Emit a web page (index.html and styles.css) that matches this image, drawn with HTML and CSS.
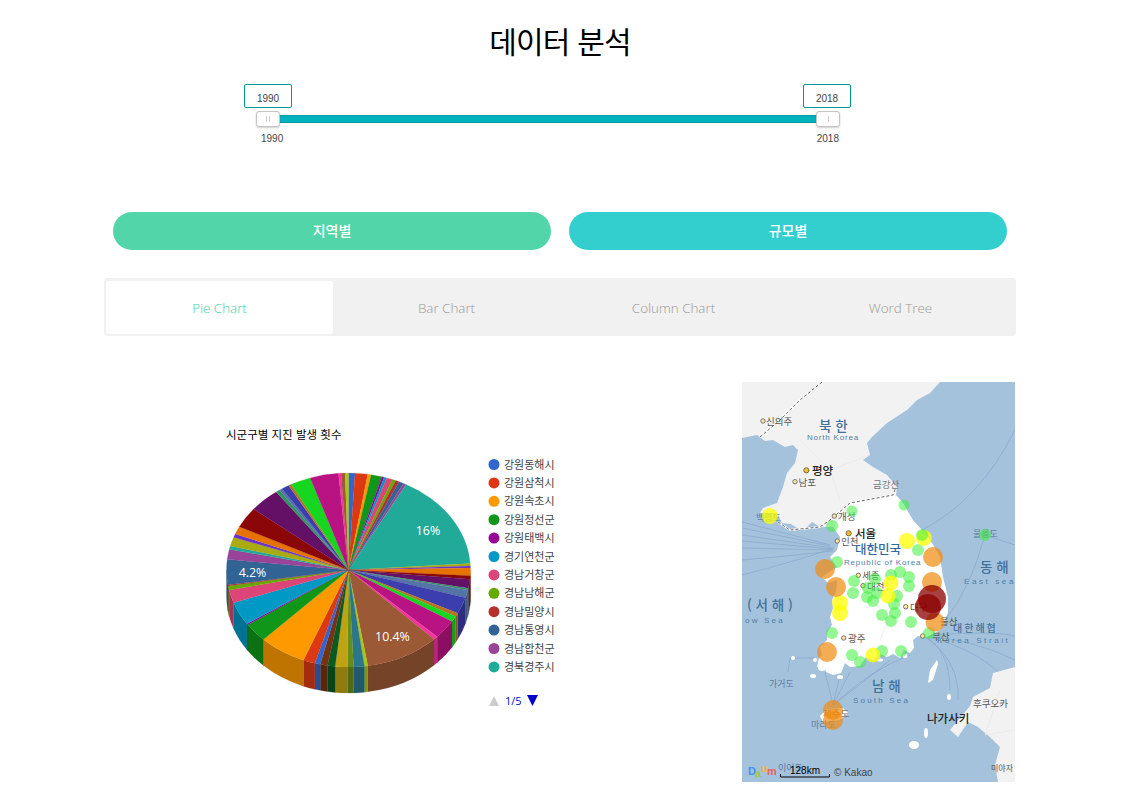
FILE: index.html
```html
<!DOCTYPE html>
<html lang="ko">

<head>
    <meta charset="UTF-8">
    <title>데이터 분석</title>
    <link rel="stylesheet" href="styles.css">
</head>

<body>
    <div id="main">
        <h1 class="title">데이터 분석</h1>

        <div class="range">
            <div class="range-boxes">
                <div class="range-box">1990</div>
                <div class="range-box">2018</div>
            </div>
            <div class="range-slider">
                <div class="range-track"></div>
                <div class="range-handle"><span class="grip"></span><span class="grip"></span></div>
                <div class="range-handle"><span class="grip"></span></div>
            </div>
            <div class="range-labels">
                <span>1990</span>
                <span>2018</span>
            </div>
        </div>

        <div class="buttons">
            <a class="button button-green">지역별</a>
            <a class="button button-teal">규모별</a>
        </div>

        <div class="tabs">
            <div class="tab active">Pie Chart</div>
            <div class="tab">Bar Chart</div>
            <div class="tab">Column Chart</div>
            <div class="tab">Word Tree</div>
        </div>

        <div class="charts">
            <svg id="pie" class="pie" width="500" height="400" viewBox="104 382 500 400">
                <text class="pie-title" x="226" y="439">시군구별 지진 발생 횟수</text>
                <g id="walls"></g>
                <g id="slices"></g>
                <text class="pie-label" x="428" y="535">16%</text>
                <text class="pie-label" x="392.5" y="641">10.4%</text>
                <text class="pie-label" x="252.5" y="577">4.2%</text>
                <g id="legend"></g>
                <polygon points="489,706 499,706 494,696" fill="#cccccc" />
                <text class="pager" x="505" y="705">1/5</text>
                <polygon points="527,695 538,695 532.5,706" fill="#0000cc" />
            </svg>

            <svg id="map" class="map" width="273" height="400" viewBox="742 382 273 400">
                <rect x="742" y="382" width="273" height="400" fill="#a5c2dd" />

                <!-- ferry lines -->
                <g class="routes">
                    <path d="M742 522 L830 545 M742 528 L830 546 M742 535 L832 548 M742 541 L832 549 M742 548 L833 550 M742 560 Q790 556 833 551 M742 575 Q800 560 834 548" />
                    <path d="M924 636 Q985 650 1015 690 M924 636 Q960 660 958 700 M924 636 Q975 640 1015 660 M924 636 Q950 650 950 690 M924 636 Q990 630 1015 636" />
                    <path d="M833 705 L825 672 M833 705 L840 675 M833 705 L850 672 M833 705 Q870 670 910 655 M833 705 Q860 685 890 660 M790 658 L815 658 M790 658 L788 672" />
                    <path d="M922 530 Q980 500 1015 430 M985 535 L1015 545 M985 535 Q970 590 945 620" />
                </g>

                <!-- north korea and china -->
                <path class="land-grey"
                    d="M742 382 L940 382 L930 393 L917 400 L907 410 L887 423 L872 437 L867 443 L870 455 L863 460 L873 467 L887 475 L897 487 L896 495 L877 498 L850 503 L833 527 L820 527 L812 522 L806 528 L800 530 L791 524 L782 523 L777 513 L760 513 L763 508 L777 503 L783 487 L787 473 L795 463 L798 450 L793 445 L785 447 L773 440 L765 441 L757 435 L742 438 Z" />
                <!-- south korea -->
                <path class="land-white"
                    d="M896 495 L903 503 L913 520 L922 530 L932 543 L940 557 L943 577 L948 597 L948 613 L940 630 L927 637 L918 636 L913 640 L914 648 L910 653 L904 650 L900 658 L893 654 L887 657 L880 654 L873 660 L866 657 L860 666 L850 667 L845 663 L841 673 L833 675 L826 672 L824 665 L817 667 L819 658 L822 655 L820 647 L827 640 L827 633 L832 625 L830 617 L833 608 L832 600 L836 592 L837 580 L828 583 L822 577 L829 572 L837 567 L830 557 L837 550 L840 537 L833 527 L850 503 L877 498 Z" />
                <path class="land-white" d="M820 716 L827 709 L843 708 L848 713 L840 720 L823 722 Z" />
                <path class="land-white" d="M937 660 L938 664 L933 680 L928 683 L930 670 Z" />
                <ellipse class="land-white" cx="949" cy="697" rx="2" ry="3" />
                <ellipse class="land-white" cx="914" cy="745" rx="5" ry="4" />
                <ellipse class="land-white" cx="926" cy="733" rx="2" ry="5" />
                <ellipse class="land-white" cx="822" cy="668" rx="4" ry="3" />
                <ellipse class="land-white" cx="813" cy="676" rx="3" ry="2" />
                <ellipse class="land-white" cx="815" cy="660" rx="2" ry="2" />
                <ellipse class="land-white" cx="793" cy="658" rx="2" ry="2" />
                <ellipse class="land-white" cx="840" cy="677" rx="3" ry="2" />
                <ellipse class="land-white" cx="880" cy="660" rx="3" ry="1.5" />
                <ellipse class="land-white" cx="905" cy="656" rx="2.5" ry="2" />
                <!-- japan -->
                <path class="land-grey"
                    d="M1015 667 L993 673 L990 688 L973 697 L970 706 L950 730 L958 737 L968 722 L978 727 L990 737 L1000 747 L995 765 L998 782 L1015 782 Z" />

                <!-- borders -->
                <path class="border" d="M822 382 L800 400 L780 420 L760 437" />
                <path class="border-dash" d="M822 382 L800 400 L780 420 L760 437" />
                <path class="border" d="M778 522 L790 530 L820 527 L830 520 L850 503 L877 498 L893 495 L896 487" />
                <path class="border-dash" d="M778 522 L790 530 L820 527 L830 520 L850 503 L877 498 L893 495 L896 487" />
                <path class="region" d="M800 440 L830 470 L870 455 M830 470 L840 500 M870 540 L900 590 L880 640 M850 590 L900 590 L940 600 M1000 690 L985 735 M1015 730 L985 735" />

                <!-- city dots -->
                <g class="city-dots">
                    <circle cx="763" cy="421" r="2.2" />
                    <circle cx="806.3" cy="470.3" r="2.6" class="big" />
                    <circle cx="795" cy="481.7" r="2.2" />
                    <circle cx="834.3" cy="516" r="2.2" />
                    <circle cx="848.7" cy="533.3" r="2.6" class="big" />
                    <circle cx="837.3" cy="541" r="2.2" />
                    <circle cx="858.3" cy="575.3" r="2.2" />
                    <circle cx="863" cy="585.7" r="2.2" />
                    <circle cx="905.7" cy="606.7" r="2.2" />
                    <circle cx="922.7" cy="636" r="2.2" />
                    <circle cx="843.7" cy="638" r="2.2" />
                </g>

                <!-- place names -->
                <g class="place">
                    <text x="766" y="425">신의주</text>
                    <text x="798.5" y="485.5">남포</text>
                    <text x="873" y="487.5" class="faint">금강산</text>
                    <text x="838" y="520">개성</text>
                    <text x="841" y="545">인천</text>
                    <text x="862" y="579">세종</text>
                    <text x="867" y="589.5">대전</text>
                    <text x="910" y="610.5">대구</text>
                    <text x="940" y="624.5">울산</text>
                    <text x="932" y="640">부산</text>
                    <text x="848" y="642">광주</text>
                    <text x="973" y="707">후쿠오카</text>
                    <text x="991" y="770.5" class="small">미야자</text>
                    <text x="823" y="717" class="faint">제주도</text>
                </g>
                <g class="place place-sea">
                    <text x="756" y="521">백령도</text>
                    <text x="973" y="536.5">울릉도</text>
                    <text x="769" y="687">가거도</text>
                    <text x="811" y="728">마라도</text>
                    <text x="778" y="771">이어도</text>
                </g>
                <text class="city" x="812" y="474.5">평양</text>
                <text class="city" x="855" y="537.5">서울</text>
                <text class="city city-jp" x="927" y="722.5">나가사키</text>

                <g class="sea-name">
                    <text x="819" y="431">북 한</text>
                    <text x="980" y="571.5">동 해</text>
                    <text x="747" y="610">( 서 해 )</text>
                    <text x="872" y="691">남 해</text>
                </g>
                <text class="country" x="855" y="554">대한민국</text>
                <text class="strait" x="953" y="631.5">대한해협</text>
                <g class="sea-en">
                    <text x="807" y="440" class="narrow">North Korea</text>
                    <text x="844" y="564.5" class="narrow">Republic of Korea</text>
                    <text x="964" y="584" class="wide">East sea</text>
                    <text x="745" y="622.5">ow Sea</text>
                    <text x="937" y="643" class="wide">Korea Strait</text>
                    <text x="853" y="703">South Sea</text>
                </g>

                <g id="bubbles"></g>

                <!-- map logo and scale -->
                <g class="daum">
                    <text x="748" y="775" fill="#4b8df0">D</text>
                    <text x="755" y="777" fill="#a4c83a">a</text>
                    <text x="761" y="772" fill="#f3b53a">u</text>
                    <text x="767" y="775" fill="#e5645c">m</text>
                </g>
                <path class="scale" d="M780.5 774 V777 H829.5 V774" />
                <text class="scale-text" x="790" y="773.5">128km</text>
                <text class="copyright" x="834" y="776">© Kakao</text>
            </svg>
        </div>
    </div>

    <script src="chart.js"></script>
</body>

</html>
```

FILE: styles.css
```css
body {
    margin: 0;
    background-color: #fff;
    font-family: "Noto Sans CJK KR", "Open Sans", sans-serif;
}

#main {
    width: 1120px;
    height: 810px;
    overflow: hidden;
}

.title {
    margin: 18px 0 0;
    height: 44px;
    line-height: 44px;
    font-size: 30px;
    font-weight: 400;
    letter-spacing: -0.8px;
    text-align: center;
    color: #000;
}

/* year slider */
.range {
    width: 607px;
    margin: 22px 0 0 244px;
}

.range-boxes {
    display: flex;
    justify-content: space-between;
}

.range-box {
    box-sizing: border-box;
    width: 48px;
    height: 24px;
    padding-top: 6px;
    border: 1px solid #00979d;
    border-radius: 2px;
    font-family: "Liberation Sans", sans-serif;
    font-size: 10px;
    line-height: 16px;
    text-align: center;
    color: #444;
}

.range-slider {
    position: relative;
    display: flex;
    justify-content: space-between;
    width: 584px;
    height: 16px;
    margin: 3px 0 0 12px;
}

.range-track {
    position: absolute;
    top: 4px;
    left: 12px;
    right: 12px;
    height: 8px;
    box-sizing: border-box;
    background-color: #00b3bf;
    border-top: 1px solid #009aa3;
    border-bottom: 1px solid #009aa3;
}

.range-handle {
    position: relative;
    display: flex;
    justify-content: center;
    align-items: center;
    gap: 2px;
    box-sizing: border-box;
    width: 24px;
    height: 16px;
    background-color: #fff;
    border: 1px solid #c4c4c4;
    border-radius: 3px;
    box-shadow: 0 1px 2px rgba(0, 0, 0, 0.2);
}

.grip {
    width: 1px;
    height: 6px;
    background-color: #ccc;
}

.range-labels {
    display: flex;
    justify-content: space-between;
    width: 578px;
    margin: 6px 0 0 17px;
    font-family: "Liberation Sans", sans-serif;
    font-size: 10px;
    line-height: 12px;
    color: #444;
}

/* buttons */
.buttons {
    display: flex;
    justify-content: center;
    gap: 18px;
    margin-top: 67px;
}

.button {
    width: 438px;
    height: 38px;
    border-radius: 19px;
    font-size: 14px;
    font-weight: 500;
    line-height: 36px;
    text-align: center;
    color: #fff;
}

.button-green {
    background-color: #53d5aa;
}

.button-teal {
    background-color: #33cfcf;
}

/* tabs */
.tabs {
    display: flex;
    box-sizing: border-box;
    width: 912px;
    height: 58px;
    margin: 28px 0 0 104px;
    padding: 3px 2px 2px;
    background-color: #f1f1f1;
    border-radius: 4px;
}

.tab {
    width: 227px;
    font-family: "Open Sans", sans-serif;
    font-size: 13.4px;
    font-weight: 300;
    line-height: 54px;
    text-align: center;
    color: #999;
}

.tab.active {
    background-color: #fff;
    border-radius: 3px;
    color: #3fd09f;
}

/* charts */
.charts {
    display: flex;
    justify-content: space-between;
    width: 911px;
    margin: 46px 0 0 104px;
}

.pie-title {
    font-size: 11.5px;
    font-weight: 400;
    fill: #000;
}

.pie-label {
    font-family: "Open Sans", sans-serif;
    font-size: 12.4px;
    text-anchor: middle;
    fill: #fff;
}

.legend-text {
    font-size: 11px;
    fill: #444;
}

.pager {
    font-family: "Open Sans", sans-serif;
    font-size: 11px;
    fill: #0011cc;
}

/* map */
.land-grey {
    fill: #f2f2f2;
}

.land-white {
    fill: #fff;
}

.routes,
.region {
    fill: none;
    stroke-width: 0.6;
}

.routes {
    stroke: #7fa3c7;
}

.region {
    stroke: #e6e6e6;
}

.border {
    fill: none;
    stroke: #fff;
    stroke-width: 2;
}

.border-dash {
    fill: none;
    stroke: #666;
    stroke-width: 1;
    stroke-dasharray: 3 2;
}

.city-dots circle {
    fill: #ffe9a8;
    stroke: #555;
    stroke-width: 0.8;
}

.city-dots .big {
    fill: #f0c020;
}

.place text {
    font-size: 9.5px;
    fill: #555;
}

.place .faint {
    fill: #777;
}

.place .small {
    font-size: 8px;
}

.place-sea text {
    font-size: 9px;
    fill: #5d7d9c;
}

.city {
    font-size: 11.5px;
    font-weight: 500;
    fill: #222;
}

.sea-name text {
    font-size: 13.5px;
    font-weight: 500;
    fill: #3f7199;
}

.country {
    font-size: 12.5px;
    font-weight: 500;
    fill: #2f6a9a;
}

.strait {
    font-size: 10px;
    font-weight: 500;
    letter-spacing: 2px;
    fill: #3f7199;
}

.sea-en text {
    font-family: "Liberation Sans", sans-serif;
    font-size: 8px;
    letter-spacing: 2.2px;
    fill: #4d7fa6;
}

.sea-en .narrow {
    letter-spacing: 0.8px;
}

.sea-en .wide {
    letter-spacing: 2.6px;
}

.daum text {
    font-family: "Liberation Sans", sans-serif;
    font-size: 11px;
    font-weight: 700;
}

.scale {
    fill: none;
    stroke: #000;
    stroke-width: 1;
}

.scale-text {
    font-family: "Liberation Sans", sans-serif;
    font-size: 10px;
    fill: #000;
}

.copyright {
    font-family: "Liberation Sans", sans-serif;
    font-size: 10px;
    fill: #444;
}
```

FILE: chart.js
```js
const NS = 'http://www.w3.org/2000/svg';

// pie geometry, in page pixels
const cx = 348.5;
const cy = 570;
const rx = 122;
const ry = 97;
const depth = 26;

// [colour, angle where the slice ends], clockwise from the top
const slices = [
    ['#3366cc', 3.1], ['#dc3912', 9.1], ['#ff9900', 10.7], ['#109618', 15.9], ['#990099', 17],
    ['#0099c6', 18.3], ['#dd4477', 21.1], ['#66aa00', 22.8], ['#b82e2e', 24.5], ['#316395', 26.8],
    ['#994499', 28.2], ['#22aa99', 86.2], ['#aaaa11', 87.6], ['#6633cc', 88.8], ['#e67300', 93.4],
    ['#8b0707', 95.5], ['#651067', 100.9], ['#329262', 101.9], ['#5574a6', 106.6], ['#3b3eac', 116.5],
    ['#b77322', 118.7], ['#16d620', 122], ['#b91383', 133.4], ['#f4359e', 135.5], ['#9c5935', 170.9],
    ['#a9c413', 172.5], ['#2a778d', 177.6], ['#668d1c', 180.5], ['#bea413', 186.3], ['#0c5922', 189.9],
    ['#743411', 193.4], ['#3366cc', 196], ['#dc3912', 201.7], ['#ff9900', 224.2], ['#109618', 235.6],
    ['#990099', 236.3], ['#0099c6', 250.3], ['#dd4477', 258.1], ['#66aa00', 260.5], ['#b82e2e', 261.2],
    ['#316395', 276.3], ['#994499', 282.3], ['#22aa99', 284.3], ['#aaaa11', 289.7], ['#6633cc', 291.8],
    ['#e67300', 296.5], ['#8b0707', 309], ['#651067', 323.6], ['#329262', 325.5], ['#5574a6', 327],
    ['#3b3eac', 330.6], ['#b77322', 332], ['#16d620', 341.7], ['#b91383', 355.3], ['#f4359e', 356.5],
    ['#9c5935', 358.4], ['#a9c413', 360]
];

const legendItems = [
    ['강원동해시', '#3366cc'], ['강원삼척시', '#dc3912'], ['강원속초시', '#ff9900'], ['강원정선군', '#109618'],
    ['강원태백시', '#990099'], ['경기연천군', '#0099c6'], ['경남거창군', '#dd4477'], ['경남남해군', '#66aa00'],
    ['경남밀양시', '#b82e2e'], ['경남통영시', '#316395'], ['경남합천군', '#994499'], ['경북경주시', '#22aa99']
];

// [x, y, radius, kind]
const bubbles = [
    [852, 511, 5.5, 'g'], [904, 505, 5.5, 'g'], [832, 526, 6, 'g'], [985, 535, 6, 'g'], [918, 550, 6, 'g'],
    [837, 562, 6, 'g'], [891, 575, 6, 'g'], [900, 572, 6, 'g'], [909, 577, 6, 'g'], [854, 581, 6, 'g'],
    [875, 579, 6, 'g'], [853, 593, 6, 'g'], [867, 597, 6, 'g'], [873, 601, 6, 'g'], [877, 593, 6, 'g'],
    [868, 588, 6, 'g'], [909, 586, 6, 'g'], [897, 596, 6, 'g'], [894, 604, 6, 'g'], [895, 613, 6, 'g'],
    [882, 615, 6, 'g'], [891, 621, 6, 'g'], [911, 622, 6, 'g'], [832, 633, 6, 'g'], [852, 655, 6, 'g'],
    [860, 662, 6, 'g'], [882, 651, 6, 'g'], [901, 651, 6, 'g'], [929, 633, 6, 'g'],
    [770, 516, 8, 'y'], [907, 541, 8, 'y'], [924, 538, 8, 'y'], [891, 583, 7.5, 'y'], [888, 596, 7.5, 'y'],
    [840, 603, 8, 'y'], [840, 613, 8, 'y'], [873, 655, 7.5, 'y'], [922, 535, 6, 'g'],
    [933, 557, 10, 'o'], [825, 569, 10, 'o'], [836, 587, 10, 'o'], [932, 582, 10, 'o'], [935, 622, 9.5, 'o'],
    [827, 652, 10, 'o'], [833, 710, 10, 'o'], [833, 720, 10, 'o'],
    [932, 599, 14, 'r'], [928, 607, 13, 'r']
];

const bubbleColors = {
    g: 'rgba(60, 240, 60, 0.55)',
    y: 'rgba(255, 255, 0, 0.75)',
    o: 'rgba(240, 140, 20, 0.72)',
    r: 'rgba(139, 0, 0, 0.75)'
};

function el(name, attrs) {
    const node = document.createElementNS(NS, name);
    for (const key in attrs) node.setAttribute(key, attrs[key]);
    return node;
}

function rim(angle, drop) {
    const rad = angle * Math.PI / 180;
    return [(cx + rx * Math.sin(rad)).toFixed(2), (cy - ry * Math.cos(rad) + drop).toFixed(2)];
}

function darken(hex) {
    const n = parseInt(hex.slice(1), 16);
    const r = Math.round((n >> 16) * 0.75);
    const g = Math.round(((n >> 8) & 255) * 0.75);
    const b = Math.round((n & 255) * 0.75);
    return `rgb(${r}, ${g}, ${b})`;
}

function drawPie() {
    const walls = document.getElementById('walls');
    const top = document.getElementById('slices');
    let start = 0;

    for (const [color, end] of slices) {
        const [x1, y1] = rim(start, 0);
        const [x2, y2] = rim(end, 0);
        const large = end - start > 180 ? 1 : 0;
        top.appendChild(el('path', {
            d: `M${cx} ${cy} L${x1} ${y1} A${rx} ${ry} 0 ${large} 1 ${x2} ${y2} Z`,
            fill: color,
            stroke: color,
            'stroke-width': 0.2
        }));

        // only the front half of the rim shows a wall
        const from = Math.max(start, 90);
        const to = Math.min(end, 270);
        if (to > from) {
            const [ax, ay] = rim(from, 0);
            const [bx, by] = rim(to, 0);
            const [cx2, cy2] = rim(to, depth);
            const [dx, dy] = rim(from, depth);
            walls.appendChild(el('path', {
                d: `M${ax} ${ay} A${rx} ${ry} 0 0 1 ${bx} ${by} L${cx2} ${cy2} A${rx} ${ry} 0 0 0 ${dx} ${dy} Z`,
                fill: darken(color),
                stroke: darken(color),
                'stroke-width': 0.2
            }));
        }
        start = end;
    }

    const legend = document.getElementById('legend');
    legendItems.forEach(([name, color], i) => {
        const y = 464.5 + i * 18.4;
        legend.appendChild(el('circle', { cx: 494, cy: y, r: 5.5, fill: color }));
        const text = el('text', { class: 'legend-text', x: 504, y: y + 4 });
        text.textContent = name;
        legend.appendChild(text);
    });
}

function drawBubbles() {
    const group = document.getElementById('bubbles');
    for (const [x, y, r, kind] of bubbles) {
        group.appendChild(el('circle', { cx: x, cy: y, r: r, fill: bubbleColors[kind] }));
    }
}

drawPie();
drawBubbles();
```
